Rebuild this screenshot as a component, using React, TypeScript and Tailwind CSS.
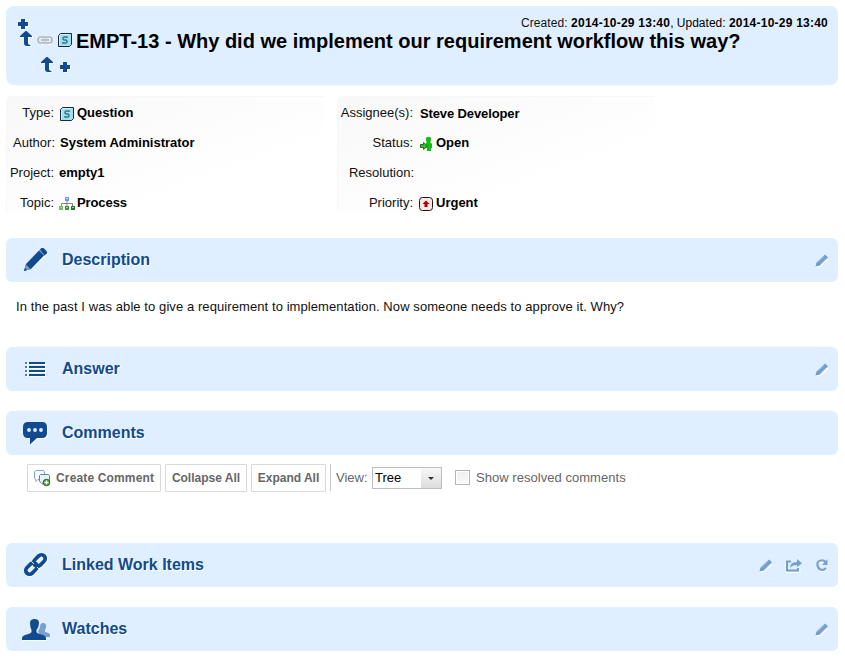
import React from "react";

const INK = "#114a8f";

const Plus = ({ className = "" }: { className?: string }) => (
  <svg width="11" height="11" viewBox="0 0 11 11" className={`shrink-0 ${className}`}>
    <path d="M4 1h4v3h3v4H8v3H4V8H1V4h3z" fill="#fff" />
    <path d="M3 0h4v3h3v4H7v3H3V7H0V3h3z" fill={INK} />
  </svg>
);

const UpArrow = ({ className = "" }: { className?: string }) => (
  <svg width="13" height="16" viewBox="0 0 13 16" className={`shrink-0 ${className}`}>
    <path d="M7 1l6 5v1H9v5l3 2v1.500H7Q5 15 5 12V7H1z" fill="#fff" />
    <path d="M5.500 0h1L12 5v1H8v6q0 2 2.500 2v1H7Q4 15 4 12V6H0V5z" fill={INK} />
  </svg>
);

const QuestionIcon = ({ className = "" }: { className?: string }) => (
  <svg width="14" height="14" viewBox="0 0 14 14" className={`shrink-0 ${className}`}>
    <path d="M.5 2.500l2-2h11v11l-2 2H.5z" fill="#a1dff0" stroke="#162b35" />
    <path d="M1.500 12V3l1-1.500h9" fill="none" stroke="#c7f3fb" />
    <path d="M9 5V4H6L5 5v1l1 1h2l1 1v1L8 10H5V9" fill="none" stroke="#397889" strokeWidth="1.500" />
  </svg>
);

const ChainSmall = ({ className = "" }: { className?: string }) => (
  <svg width="17" height="9" viewBox="0 0 17 9" className={`shrink-0 ${className}`} fill="none">
    <path d="M7 8.500H4M14 8.500h-3" stroke="#fff" />
    <path d="M7 2.300V1H3.500Q1 1 1 4t2.500 3H7V5.700M9 2.300V1h3.500Q15 1 15 4t-2.500 3H9V5.700" stroke="#b3b8be" strokeWidth="1.700" />
    <path d="M4 4h8" stroke="#b3b8be" strokeWidth="1.700" />
  </svg>
);

const TopicIcon = () => (
  <svg width="16" height="13" viewBox="0 0 16 13" className="mt-px shrink-0">
    <path d="M2.500 9V6.500h11V9M8 4v5" fill="none" stroke="#858585" />
    <rect x="6" y="0" width="4" height="4" fill="#6b9fe5" />
    <path d="M7 1h2v1H7z" fill="#c0d9ff" />
    <path d="M0 9h4v4H0z" fill="#73ba65" /><path d="M6 9h4v4H6z" fill="#3e963c" /><path d="M12 9h4v4h-4z" fill="#25772c" />
    <path d="M1 10h2v1H1zM7 10h2v1H7zM13 10h2v1h-2z" fill="#9bd58e" />
  </svg>
);

const OpenIcon = () => (
  <svg width="13" height="14" viewBox="0 0 13 14" className="mt-[2px] shrink-0">
    <path d="M7 0h3l1 1v3l-1 1 2 2v4h-1v3H7v-3H6V6l1-1-1-1V1z" fill="#16bd13" />
    <path d="M.5 7.500h3v-2L7.500 9l-4 3.500v-2h-3z" fill="#24c925" stroke="#2c672c" />
  </svg>
);

const UrgentIcon = () => (
  <svg width="14" height="14" viewBox="0 0 14 14" className="mt-[2px] shrink-0">
    <rect x=".5" y=".5" width="13" height="13" rx="3" fill="#ffe5e5" stroke="#171717" />
    <path d="M7 3.500L10.500 7H8.500v3h-3V7h-2z" fill="#a60000" />
  </svg>
);

const PencilBig = () => (
  <svg width="28" height="28" viewBox="0 0 28 28">
    <path d="M3 26l2-7L20 4l6 4L10 23z" fill="#fff" />
    <path d="M2 25l2-7L17 4.500l5 5L9 23z" fill={INK} />
    <path d="M17.700 3.800L19.500 2h2L25 5.500v1.700l-2.300 2.300z" fill={INK} />
    <path d="M17.200 4.200l5.200 5.200" stroke="#4775ad" strokeWidth=".7" />
    <path d="M4 18.500L8.500 23 2 25z" fill="#7399c8" /><path d="M2 25l1-3 2 2z" fill={INK} />
  </svg>
);

const ListIcon = () => (
  <svg width="28" height="28" viewBox="0 0 28 28">
    <path d="M4 9h2M8 9h16M4 13h2M8 13h16M4 17h2M8 17h16M4 21h2M8 21h16" stroke="#fff" strokeWidth="2" />
    <path d="M3 8h2M3 12h2M3 16h2M3 20h2" stroke="#477db7" strokeWidth="2" />
    <path d="M7 8h16M7 12h16M7 16h16M7 20h16" stroke={INK} strokeWidth="2" />
  </svg>
);

const CommentIcon = () => (
  <svg width="28" height="28" viewBox="0 0 28 28">
    <path d="M6 4h16q4 0 4 4v8q0 4-4 4h-6l-7 6V20H6z" fill="#fff" />
    <path d="M6 3h14q5 0 5 5v6q0 5-5 5h-5l-7 6.500V19H6q-5 0-5-5V8q0-5 5-5z" fill={INK} />
    <g fill="#e0efff"><circle cx="7" cy="11" r="1.900" /><circle cx="13" cy="11" r="1.900" /><circle cx="19" cy="11" r="1.900" /></g>
  </svg>
);

const ChainBig = () => (
  <svg width="28" height="28" viewBox="0 0 28 28" fill="none">
    <g transform="translate(.8 1)" stroke="#fff" strokeWidth="3.500">
      <rect x="-6.500" y="-3.800" width="13" height="7.600" rx="3.800" transform="translate(17.500 9.500) rotate(-45)" />
      <rect x="-6.500" y="-3.800" width="13" height="7.600" rx="3.800" transform="translate(9.500 17.500) rotate(-45)" />
    </g>
    <rect x="-6.500" y="-3.800" width="13" height="7.600" rx="3.800" transform="translate(17.500 9.500) rotate(-45)" stroke={INK} strokeWidth="3.700" />
    <rect x="-6.500" y="-3.800" width="13" height="7.600" rx="3.800" transform="translate(9.500 17.500) rotate(-45)" stroke={INK} strokeWidth="3.700" />
    <path d="M9.500 10.500l2.500 2.500M15 16l2.500 2.500" stroke="#e0efff" />
  </svg>
);

const PeopleIcon = () => (
  <svg width="30" height="28" viewBox="0 0 30 28">
    <path d="M18 12q0-4 3-4 4 0 3 5l-1 2v2q5 1 5 3v2h-8l-4-5z" fill="#7c9fca" />
    <path d="M8 25h17v1H1v-1z" fill="#fff" />
    <path d="M8 8q0-4 4.500-4T17 8q0 4-2.500 7v2q0 1 3 2 6.500 1.500 6.500 4v2H0v-2q0-2.500 6.500-4 3-1 3-2v-2Q8 12 8 8z" fill={INK} />
  </svg>
);

const PencilSmall = () => (
  <svg width="14" height="14" viewBox="0 0 14 14">
    <path d="M1 13.500l1-4L10 2l3.500 3.500-8 7.500z" fill="#fff" />
    <path d="M.5 12.500l1-4 7.500-7L10 .5l3 3-8 8z" fill="#6f9bcb" />
    <path d="M3 8.500l6-6M5 10.500l6-6" stroke="#b5d1ee" strokeWidth=".7" />
  </svg>
);

const ShareIcon = () => (
  <svg width="17" height="14" viewBox="0 0 17 14" className="-ml-[2px]">
    <path d="M1 4v9.500h14V10" fill="none" stroke="#fff" />
    <path d="M6 2.500H2v9h11V9" fill="none" stroke="#739dcb" strokeWidth="2" />
    <path d="M5 9q0-6 7-6V0l5 4.200L12 8V6Q7 6 5 9z" fill="#739dcb" />
  </svg>
);

const RefreshIcon = () => (
  <svg width="13" height="14" viewBox="0 0 13 14">
    <path d="M10 9q-2 2.500-5 2T1.500 6 5 1.800q3-.8 5 2" transform="translate(.5 1)" fill="none" stroke="#fff" strokeWidth="2" />
    <path d="M10 9q-2 2.500-5 1.800T1.500 6 5 1.500q3-.8 5 2" fill="none" stroke="#7ba1cd" strokeWidth="2.200" />
    <path d="M11.500 0v6H6z" fill="#7ba1cd" />
  </svg>
);

const CreateIcon = () => (
  <svg width="17" height="17" viewBox="0 0 17 17" className="shrink-0">
    <path d="M2.500 .5h7l1 1v7l-1 1H4l-2 2v-2l-1.500-1v-7z" fill="#f5faff" stroke="#7fa5cd" />
    <path d="M6.500 4.500h8l1 1v6l-1 1H9v2l-2-2-1.500-1v-6z" fill="#e8f2fc" stroke="#6083a8" />
    <circle cx="12.500" cy="12.500" r="3.300" fill="#4d9c32" stroke="#277517" />
    <path d="M12.500 10.500v4M10.500 12.500h4" stroke="#fff" strokeWidth="1.300" />
  </svg>
);

function Section({ icon, title, spacing, width, actions }: {
  icon: React.ReactNode; title: string; spacing?: string; width: string; actions?: React.ReactNode;
}) {
  return (
    <section className={`flex h-[44px] items-center rounded-[6px] bg-[#e0efff] pr-[9px] pl-[16px] ${spacing ?? ""}`}>
      <div className="flex w-[40px] shrink-0">{icon}</div>
      <h2 className={`text-[16px] leading-[20px] font-bold whitespace-nowrap text-[#114a8f] -mt-px [text-shadow:1px_1px_0_#fff] ${width}`}>{title}</h2>
      <div className="mt-[2px] ml-auto flex items-center gap-[14px]">{actions}</div>
    </section>
  );
}

function Field({ label, icon, value, labelWidth, gap, iconGap = "ml-[3px]" }: {
  label: string; icon?: React.ReactNode; value?: string; labelWidth: string; gap: string; iconGap?: string;
}) {
  return (
    <div className="flex h-[30px] items-center whitespace-nowrap">
      <span className={`shrink-0 text-right text-[#111] ${labelWidth}`}>{label}</span>
      <span className={`flex items-center font-bold ${gap}`}>{icon}<span className={icon ? iconGap : ""}>{value}</span></span>
    </div>
  );
}

export default function App() {
  return (
    <main className="h-[667px] w-[845px] overflow-hidden bg-white px-[6px] pt-[6px] font-['Liberation_Sans',Arial,sans-serif] text-[13px] leading-[16px] text-black">
      <div className="w-[832px]">
        <header className="h-[79px] rounded-[8px] bg-[#e0efff]">
          <div className="flex h-[25px] pt-[9px] pr-[10px] pl-[12px]">
            <Plus className="mt-[4px]" />
            <div className="ml-auto text-[12px] whitespace-nowrap"><span className="tracking-[0.08px] text-[#111]">Created: </span><b className="tracking-[0.23px]">2014-10-29 13:40</b>, Updated: <b className="tracking-[0.23px]">2014-10-29 13:40</b></div>
          </div>
          <div className="flex h-[25px] pl-[14px]">
            <UpArrow />
            <ChainSmall className="mt-[5px] ml-[4px]" />
            <QuestionIcon className="mt-[2px] ml-[4px]" />
            <h1 className="-mt-[2px] ml-[4px] text-[20px] leading-[24px] font-bold whitespace-nowrap">EMPT-13 - Why did we implement our requirement workflow this way?</h1>
          </div>
          <div className="flex pt-px pl-[35px]"><UpArrow /><Plus className="mt-[5px] ml-[6px]" /></div>
        </header>

        <div className="mt-[11px] flex h-[116px]">
          <div className="mr-[13px] w-[318px] rounded-tl-[6px] bg-linear-to-br from-[#f8f8f8] to-white to-70% pt-[2px] pl-px shadow-[inset_1px_1px_0_#f7f7f7]">
            <Field labelWidth="w-[47px]" gap="ml-[6px]" label="Type:" icon={<QuestionIcon className="mt-[2px]" />} value="Question" />
            <Field labelWidth="w-[48px]" gap="ml-[5px]" label="Author:" value="System Administrator" />
            <Field labelWidth="w-[47px]" gap="ml-[5px]" label="Project:" value="empty1" />
            <Field labelWidth="w-[47px]" gap="ml-[5px] tracking-[-0.1px]" label="Topic:" icon={<TopicIcon />} iconGap="ml-[2px]" value="Process" />
          </div>
          <div className="w-[318px] rounded-tl-[6px] bg-linear-to-br from-[#f8f8f8] to-white to-70% pt-[2px] pl-px shadow-[inset_1px_1px_0_#f7f7f7]">
            <Field labelWidth="w-[75px]" gap="ml-[7px] mt-px tracking-[-0.12px]" label="Assignee(s):" value="Steve Developer" />
            <Field labelWidth="w-[75px]" gap="ml-[7px]" label="Status:" icon={<OpenIcon />} value="Open" />
            <Field labelWidth="w-[76px]" gap="" label="Resolution:" />
            <Field labelWidth="w-[75px]" gap="ml-[6px]" label="Priority:" icon={<UrgentIcon />} value="Urgent" />
          </div>
        </div>

        <Section spacing="mt-[26px]" icon={<PencilBig />} title="Description" width="w-[90px]" actions={<PencilSmall />} />
        <p className="h-[65px] pt-[17px] pl-[10px] tracking-[0.083px] whitespace-nowrap text-[#111]">In the past I was able to give a requirement to implementation. Now someone needs to approve it. Why?</p>
        <Section icon={<ListIcon />} title="Answer" width="w-[60px]" actions={<PencilSmall />} />
        <Section spacing="mt-[20px]" icon={<CommentIcon />} title="Comments" width="w-[90px]" />

        <div className="flex h-[88px] items-start pt-[9px] pl-[21px] text-[#666]">
          <button className="flex h-[28px] w-[134px] items-center rounded-[1px] border border-[#dadada] pl-[6px] text-[12px] font-bold whitespace-nowrap"><CreateIcon /><span className="ml-[5px] tracking-[0.15px]">Create Comment</span></button>
          <button className="ml-[4px] h-[28px] w-[82px] rounded-[1px] border border-[#dadada] text-[12px] font-bold whitespace-nowrap">Collapse All</button>
          <button className="ml-[4px] h-[28px] w-[75px] rounded-[1px] border border-[#dadada] text-[12px] font-bold whitespace-nowrap">Expand All</button>
          <div className="ml-[4px] h-[27px] w-px bg-[#c7c7c7]" />
          <span className="mt-[6px] ml-[5px] w-[36px] whitespace-nowrap">View:</span>
          <div className="mt-[3px] flex h-[22px] w-[70px] border border-[#bdbdbd] pl-[2px] text-black">
            <span className="mt-[2px]">Tree</span>
            <div className="ml-auto flex w-[20px] items-center justify-center bg-linear-to-b from-[#f8f8f8] to-[#ddd]">
              <svg width="6" height="3" viewBox="0 0 6 3"><path d="M0 0h6L3 3z" fill="#333" /></svg>
            </div>
          </div>
          <div className="mt-[6px] ml-[13px] h-[15px] w-[15px] border border-[#b5b5b5] bg-linear-to-b from-[#eee] to-[#fafafa] shadow-[inset_0_0_0_1px_white]" />
          <span className="mt-[6px] ml-[6px] tracking-[0.04px] whitespace-nowrap">Show resolved comments</span>
        </div>

        <Section icon={<ChainBig />} title="Linked Work Items" width="w-[145px]" actions={<><PencilSmall /><ShareIcon /><RefreshIcon /></>} />
        <Section spacing="mt-[20px]" icon={<PeopleIcon />} title="Watches" width="w-[70px]" actions={<PencilSmall />} />
      </div>
    </main>
  );
}
